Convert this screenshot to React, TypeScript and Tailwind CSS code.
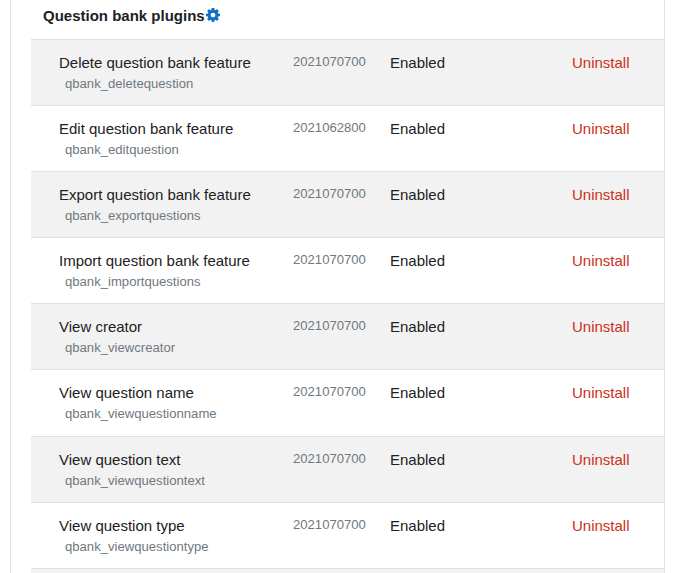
const plugins = [
  { name: "Delete question bank feature", id: "qbank_deletequestion", version: "2021070700", height: "h-[66px]" },
  { name: "Edit question bank feature", id: "qbank_editquestion", version: "2021062800", height: "h-[66px]" },
  { name: "Export question bank feature", id: "qbank_exportquestions", version: "2021070700", height: "h-[66px]" },
  { name: "Import question bank feature", id: "qbank_importquestions", version: "2021070700", height: "h-[66px]" },
  { name: "View creator", id: "qbank_viewcreator", version: "2021070700", height: "h-[66px]" },
  { name: "View question name", id: "qbank_viewquestionname", version: "2021070700", height: "h-[67px]" },
  { name: "View question text", id: "qbank_viewquestiontext", version: "2021070700", height: "h-[66px]" },
  { name: "View question type", id: "qbank_viewquestiontype", version: "2021070700", height: "h-[66px]" },
];

function Cog() {
  return (
    <svg viewBox="0 0 1536 1536" fill="currentColor" aria-hidden="true" className="ml-px mt-[3px] size-[14px] text-[#0f6fc5]">
      <path d="M1024 768q0-106-75-181t-181-75-181 75-75 181 75 181 181 75 181-75 75-181zm512-109v222q0 12-8 23t-20 13l-185 28q-19 54-39 91 35 50 107 138 10 12 10 25t-9 23q-27 37-99 108t-94 71q-12 0-26-9l-138-108q-44 23-91 38-16 136-29 186-7 28-36 28H657q-14 0-24.500-8.500T621 1506l-28-184q-49-16-90-37l-141 107q-10 9-25 9-14 0-25-11-126-114-165-168-7-10-7-23 0-12 8-23 15-21 51-66.500t54-70.500q-27-50-41-99L29 913q-13-2-21-12.500T0 877V655q0-12 8-23t19-13l186-28q14-46 39-92-40-57-107-138-10-12-10-24 0-10 9-23 26-36 98.500-107.500T337 135q13 0 26 10l138 107q44-23 91-38 16-136 29-186 7-28 36-28h222q14 0 24.500 8.500T915 30l28 184q49 16 90 37l142-107q9-9 24-9 13 0 25 10 129 119 165 170 7 8 7 22 0 12-8 23-15 21-51 66.500t-54 70.500q26 50 41 98l183 28q13 2 21 12.500t8 23.500z" />
    </svg>
  );
}

export default function App() {
  return (
    <div className="h-[573px] w-[689px] overflow-hidden bg-white pl-[10px] font-['Liberation_Sans',Arial,sans-serif] text-[15px] leading-[22px] text-[#1d2125]">
      <div className="h-full w-[655px] border-x border-[#dee2e6] pl-5">
        <div className="flex h-[39px] items-start pl-3 pt-[5px] font-bold">
          <span>Question bank plugins</span>
          <Cog />
        </div>
        {plugins.map((p) => (
          <div
            key={p.id}
            className={`${p.height} flex border-t border-[#dee2e6] pt-3 odd:bg-white even:bg-[#f2f2f2]`}
          >
            <div className="w-[262px] pl-7">
              <div>{p.name}</div>
              <div className="pl-1.5 text-[13.125px] leading-5 text-[#6f7880]">{p.id}</div>
            </div>
            <div className="w-[97px] text-[13.125px] leading-5 text-[#6f7880]">{p.version}</div>
            <div className="w-[182px]">Enabled</div>
            <a className="text-[#ca3120]">Uninstall</a>
          </div>
        ))}
        <div className="h-[66px] border-t border-[#dee2e6] bg-[#f2f2f2]" />
      </div>
    </div>
  );
}
